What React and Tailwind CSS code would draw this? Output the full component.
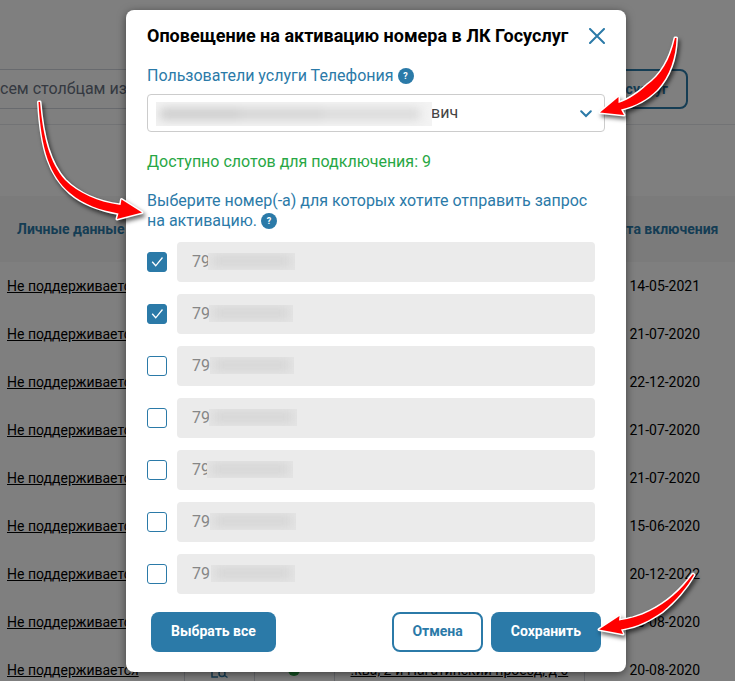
import { useState } from 'react';

const ROWS = [
  { date: '14-05-2021' },
  { date: '21-07-2020' },
  { date: '22-12-2020' },
  { date: '21-07-2020' },
  { date: '21-07-2020' },
  { date: '15-06-2020' },
  { date: '20-12-2022' },
  { date: '20-08-2020' },
  { date: '20-08-2020', address: '.ква, 2-й Нагатинский проезд, д 6' },
];

// mask = classes of the smear that hides the rest of the number
const NUMBERS = [
  { id: 1, checked: true, mask: 'left-[31px] w-[87px]' },
  { id: 2, checked: true, mask: 'left-[32px] w-[84px]' },
  { id: 3, checked: false, mask: 'left-[33px] w-[84px]' },
  { id: 4, checked: false, mask: 'left-[32px] w-[88px]' },
  { id: 5, checked: false, mask: 'left-[30px] w-[86px]' },
  { id: 6, checked: false, mask: 'left-[33px] w-[86px]' },
  { id: 7, checked: false, mask: 'left-[34px] w-[84px]' },
];

const ARROWS = [
  'M38.500 102 C41 150 50 176 70 193 C84 205 100 210 118.500 213.500 L117 219 L142 212.500 L121.500 199.500 L120.500 205 C98 202 78 193 65 180 C50 163 43 138 40 102 Z',
  'M675 38 C670 60 661 75 647 85 C638 93 630 99 618.500 103 L618.500 97 L600 112.500 L624 115 L621 109.500 C636 106 648 99 657 90 C670 76 676 57 676.500 38 Z',
  'M693 574 C681 590 667 603 650 611 C640 616 630 619 619 620.500 L619.500 616 L599 629.500 L623 634 L621 629.500 C638 627 650 620 662 612 C677 600 687 587 694 575 Z',
];

const Help = () => (
  <button type="button" aria-label="Справка"
    className="inline-flex w-4 h-4 mt-0.5 ml-1 items-center justify-center rounded-full bg-[#2b7aa8] text-white text-[9px] leading-none font-bold align-top">
    ?
  </button>
);

function PageBehind() {
  return (
    <div className="h-full bg-white">
      <div className="flex items-center h-[125px] pt-[69px] pb-4 pr-[47px] border-b border-gray-200">
        <input type="text" aria-label="Поиск" placeholder="сем столбцам из"
          className="w-[380px] h-10 border-y border-gray-300 text-base placeholder:text-gray-500" />
        <a href="#gosuslugi"
          className="ml-auto h-10 flex items-center px-[18px] border-2 border-[#2b7aa8] rounded-lg text-sm font-bold text-[#2b7aa8] whitespace-nowrap">
          Оповещение в ЛК Госуслуг
        </a>
      </div>
      <table className="mt-[71px] w-full min-w-[735px] table-fixed border-collapse text-sm">
        <thead>
          <tr className="h-[66px] bg-[#f6f6f6] text-[#2b7aa8]">
            <th className="w-[184px] pl-[17px] text-left">Личные данные</th>
            <th className="w-[70px]" />
            <th className="w-20" />
            <th className="w-[250px]" />
            <th className="pl-2 whitespace-nowrap">Дата включения</th>
          </tr>
        </thead>
        <tbody>
          {ROWS.map((row, i) => (
            <tr key={i} className="h-12">
              <td className="pl-[7px] border-r border-gray-300">
                <a href="#person" className="underline">Не поддерживается</a>
              </td>
              <td className="border-r border-gray-300">
                <svg viewBox="0 0 18 18" className="block w-[18px] h-[18px] mx-auto" fill="none" stroke="#2b7aa8" strokeWidth="1.5">
                  <path d="M8 16H2V1h11v5" />
                  <circle cx="12" cy="12.500" r="3" />
                  <path d="M14.500 14.500l3 2" />
                </svg>
              </td>
              <td className="border-r border-gray-300">
                <svg viewBox="0 0 12 12" className="block w-3 h-3 mx-auto">
                  <circle cx="6" cy="6" r="6" fill="#28a745" />
                </svg>
              </td>
              <td className="pl-4 border-r border-gray-300 whitespace-nowrap overflow-hidden">
                {row.address && <a href="#address" className="underline">{row.address}</a>}
              </td>
              <td className="pl-[10px] text-center">{row.date}</td>
            </tr>
          ))}
        </tbody>
      </table>
    </div>
  );
}

export default function App() {
  const [numbers, setNumbers] = useState(NUMBERS);

  const toggle = (id) =>
    setNumbers(numbers.map(n => (n.id === id ? { ...n, checked: !n.checked } : n)));
  const selectAll = () => setNumbers(numbers.map(n => ({ ...n, checked: true })));

  return (
    <div className="relative h-screen overflow-hidden text-black font-[Roboto,sans-serif]">
      <PageBehind />

      <div className="absolute inset-0 flex justify-center items-start pt-[10px] pl-[17px] bg-black/50">
        <div role="dialog" aria-labelledby="dlg-title"
          className="relative w-full max-w-[500px] bg-white rounded-lg px-[21px] pt-3 pb-5 shadow-[0_2px_8px_rgba(0,0,0,0.5)]">
          <div className="flex items-center justify-between h-7">
            <h1 id="dlg-title" className="text-lg font-bold whitespace-nowrap">Оповещение на активацию номера в ЛК Госуслуг</h1>
            <button type="button" aria-label="Закрыть">
              <svg viewBox="0 0 16 16" className="block w-4 h-4" stroke="#2b7aa8" strokeWidth="2" strokeLinecap="round">
                <path d="M1 1l14 14M15 1L1 15" />
              </svg>
            </button>
          </div>

          <div className="mt-4 leading-5 text-[#2b7aa8]">
            <label htmlFor="user">Пользователи услуги Телефония</label>
            <Help />
          </div>
          <div className="relative mt-2">
            <select id="user"
              className="block w-full h-[38px] pl-[283px] pr-8 appearance-none border border-[#ccc] rounded bg-white text-base text-[#444]">
              <option>вич</option>
            </select>
            <span className="absolute left-[9px] top-2 w-[276px] h-6 overflow-hidden bg-[#f3f3f3]">
              <span className="flex items-center h-full px-1 blur-[5px]">
                <span className="w-20 h-3 bg-[#cdcdcd]" />
                <span className="w-[84px] h-3 bg-[#d4d4d4]" />
                <span className="w-24 h-3 bg-[#dadada]" />
              </span>
            </span>
            <svg viewBox="0 0 12 8" className="absolute right-[13px] top-4 w-3 h-2 pointer-events-none" fill="none" stroke="#2b7aa8" strokeWidth="2" strokeLinecap="round">
              <path d="M1.200 1.200L6 6l4.800-4.800" />
            </svg>
          </div>

          <p className="mt-5 leading-5 text-[#28a745]">Доступно слотов для подключения: 9</p>
          <p className="mt-[19px] leading-5 text-[#2b7aa8]">
            Выберите номер(-а) для которых хотите отправить запрос на активацию.
            <Help />
          </p>

          <div className="flex flex-col gap-3 mt-[11px] pr-[10px]">
            {numbers.map(n => (
              <div key={n.id} className="flex items-center gap-[10px]">
                <span className="relative w-5 h-5">
                  <input type="checkbox" aria-label={`Номер ${n.id}`} checked={n.checked} onChange={() => toggle(n.id)}
                    className="block w-5 h-5 appearance-none border border-[#2b7aa8] rounded-[3px] bg-white checked:bg-[#2b7aa8]" />
                  {n.checked && (
                    <svg viewBox="0 0 20 20" className="absolute inset-0 w-5 h-5 pointer-events-none" fill="none" stroke="#fff" strokeWidth="1.3">
                      <path d="M5.200 9.800l3.500 4L15.500 5.500" />
                    </svg>
                  )}
                </span>
                <div className="relative flex-1">
                  <input type="text" readOnly value="79" aria-label={`Телефон ${n.id}`}
                    className="block w-full h-10 px-[15px] pb-0.5 rounded bg-[#ebebeb] text-base text-[#868686]" />
                  <span className={`absolute top-[11px] h-[17px] overflow-hidden bg-[#e5e5e5] ${n.mask}`}>
                    <span className="block h-3 mx-1 mt-0.5 bg-[#d6d6d6] blur-[5px]" />
                  </span>
                </div>
              </div>
            ))}
          </div>

          <div className="flex gap-2 mt-[18px] px-1 text-sm font-bold">
            <button type="button" onClick={selectAll}
              className="h-10 pb-0.5 mr-auto px-5 rounded-lg bg-[#2b7aa8] text-white">Выбрать все</button>
            <button type="button"
              className="h-10 pb-0.5 px-[18px] rounded-lg border-2 border-[#2b7aa8] text-[#2b7aa8]">Отмена</button>
            <button type="button"
              className="h-10 pb-0.5 px-5 rounded-lg bg-[#2b7aa8] text-white">Сохранить</button>
          </div>

          {/* hint arrows over the dialog */}
          <svg viewBox="126 10 500 662" className="absolute left-0 top-0 w-[500px] h-[662px] overflow-visible pointer-events-none drop-shadow-[2px_3px_2px_rgba(0,0,0,0.6)]">
            {ARROWS.map(d => (
              <path key={d} d={d} fill="#f00" stroke="#fff" strokeWidth="3" strokeLinejoin="round" style={{ paintOrder: 'stroke' }} />
            ))}
          </svg>
        </div>
      </div>
    </div>
  );
}
